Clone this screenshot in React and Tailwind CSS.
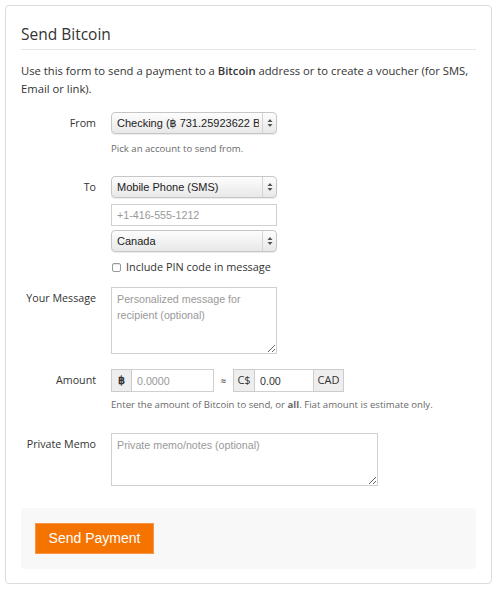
import React from 'react';

const openSans = "font-['Open_Sans',sans-serif]";
const helv = "font-['Liberation_Sans',Arial,sans-serif]";

function Arrows() {
    return (
        <svg width="6" height="10" viewBox="0 0 6 10">
            <path d="M3 1 L5.5 4 H0.5 Z M3 9 L5.5 6 H0.5 Z" fill="#555" />
        </svg>
    );
}

// Mac-style select box
function FakeSelect({ children, className = "" }) {
    return (
        <div className={`flex h-[22px] w-[166px] items-stretch overflow-hidden rounded-[4px] border border-[#c6c6c6] bg-linear-to-b from-[#fdfdfd] to-[#e8e8e8] shadow-[0_1px_1px_rgba(0,0,0,0.08)] ${helv} ${className}`}>
            <span className="mr-[3px] flex-1 overflow-hidden whitespace-nowrap pl-[5px] text-[11px] leading-[20px] text-[#222]">{children}</span>
            <span className="flex w-[14px] items-center justify-center border-l border-[#d4d4d4]">
                <Arrows />
            </span>
        </div>
    );
}

function Row({ label, children, className = "" }) {
    return (
        <div className={`flex ${className}`}>
            <div className={`w-[75px] shrink-0 whitespace-nowrap text-right text-[10.7px] leading-[22px] text-[#333] ${openSans}`}>{label}</div>
            <div className="ml-[15px] flex flex-col">{children}</div>
        </div>
    );
}

function Help({ children, className = "" }) {
    return <p className={`whitespace-nowrap text-[9.6px] leading-[16px] text-[#6a6a6a] ${openSans} ${className}`}>{children}</p>;
}

export default function App() {
    return (
        <div className="min-h-[596px] bg-white pt-[5px] pl-[5px]">
            <div className="w-[487px] rounded-[4px] border border-[#dcdcdc] px-[15px] pt-[18px] pb-[14px]">
                {/* header */}
                <h1 className={`border-b border-[#e6e6e6] pb-[5px] text-[15.5px] leading-[20px] text-[#333] ${openSans}`}>Send Bitcoin</h1>
                <p className={`mt-[12px] text-[11.25px] leading-[18px] text-[#333] ${openSans}`}>
                    Use this form to send a payment to a <b className="font-semibold">Bitcoin</b> address or to create a voucher (for SMS, Email or link).
                </p>

                {/* From */}
                <Row label="From" className="mt-[14px]">
                    <FakeSelect>
                        Checking (<span className="font-['DejaVu_Sans',sans-serif] text-[11px]">฿</span> 731.25923622 BTC)
                    </FakeSelect>
                    <Help className="mt-[7px]">Pick an account to send from.</Help>
                </Row>

                {/* To */}
                <Row label="To" className="mt-[19px]">
                    <FakeSelect>Mobile Phone (SMS)</FakeSelect>
                    <input
                        placeholder="+1-416-555-1212"
                        className={`mt-[6px] h-[22px] w-[166px] border border-[#d0d0d0] px-[5px] text-[10.7px] text-[#333] placeholder:text-[#999] outline-none ${helv}`}
                    />
                    <FakeSelect className="mt-[4px]">Canada</FakeSelect>
                    <label className={`mt-[7px] flex h-[16px] items-center text-[10.9px] text-[#333] ${openSans}`}>
                        <span className="ml-[1px] h-[9px] w-[9px] rounded-[2px] border border-[#9a9a9a] bg-white shadow-[inset_0_1px_1px_rgba(0,0,0,0.1)]"></span>
                        <span className="ml-[5px]">Include PIN code in message</span>
                    </label>
                </Row>

                {/* Message */}
                <Row label="Your Message" className="mt-[12px]">
                    <textarea
                        placeholder="Personalized message for recipient (optional)"
                        className={`block h-[67px] w-[166px] border border-[#d0d0d0] px-[5px] py-[3px] text-[10.7px] leading-[16px] text-[#333] placeholder:text-[#999] outline-none ${helv}`}
                    />
                </Row>

                {/* Amount */}
                <Row label="Amount" className="mt-[15px]">
                    <div className="flex h-[23px] items-center">
                        <div className="flex h-full">
                            <span className={`flex w-[21px] items-center justify-center border border-[#ccc] bg-[#eee] text-[11px] font-bold text-[#333] ${openSans}`}>฿</span>
                            <input
                                placeholder="0.0000"
                                className={`h-full w-[82px] border border-l-0 border-[#d0d0d0] px-[5px] text-[10.7px] text-[#333] placeholder:text-[#999] outline-none ${helv}`}
                            />
                        </div>
                        <span className="w-[19px] text-center text-[9px] font-bold text-[#555]">≈</span>
                        <div className="flex h-full">
                            <span className={`flex w-[22px] items-center justify-center border border-[#ccc] bg-[#eee] text-[11px] text-[#333] ${openSans}`}>C$</span>
                            <input
                                defaultValue="0.00"
                                className={`h-full w-[59px] border border-l-0 border-[#d0d0d0] px-[5px] text-[10.7px] text-[#333] outline-none ${helv}`}
                            />
                            <span className={`flex w-[30px] items-center justify-center border border-l-0 border-[#ccc] bg-[#eee] text-[11px] text-[#333] ${openSans}`}>CAD</span>
                        </div>
                    </div>
                    <Help className="mt-[5px]">
                        Enter the amount of Bitcoin to send, or <b className="font-bold">all</b>. Fiat amount is estimate only.
                    </Help>
                </Row>

                {/* Memo */}
                <Row label="Private Memo" className="mt-[20px]">
                    <textarea
                        placeholder="Private memo/notes (optional)"
                        className={`block h-[53px] w-[267px] border border-[#d0d0d0] px-[5px] py-[3px] text-[10.7px] leading-[16px] text-[#333] placeholder:text-[#999] outline-none ${helv}`}
                    />
                </Row>

                {/* footer */}
                <div className="mt-[22px] h-[61px] rounded-[4px] bg-[#f8f8f8] pl-[14px] pt-[15px]">
                    <button className={`h-[31px] w-[119px] border border-[#f79646] bg-[#f57300] text-[14px] text-white ${helv}`}>
                        Send Payment
                    </button>
                </div>
            </div>
        </div>
    );
}
